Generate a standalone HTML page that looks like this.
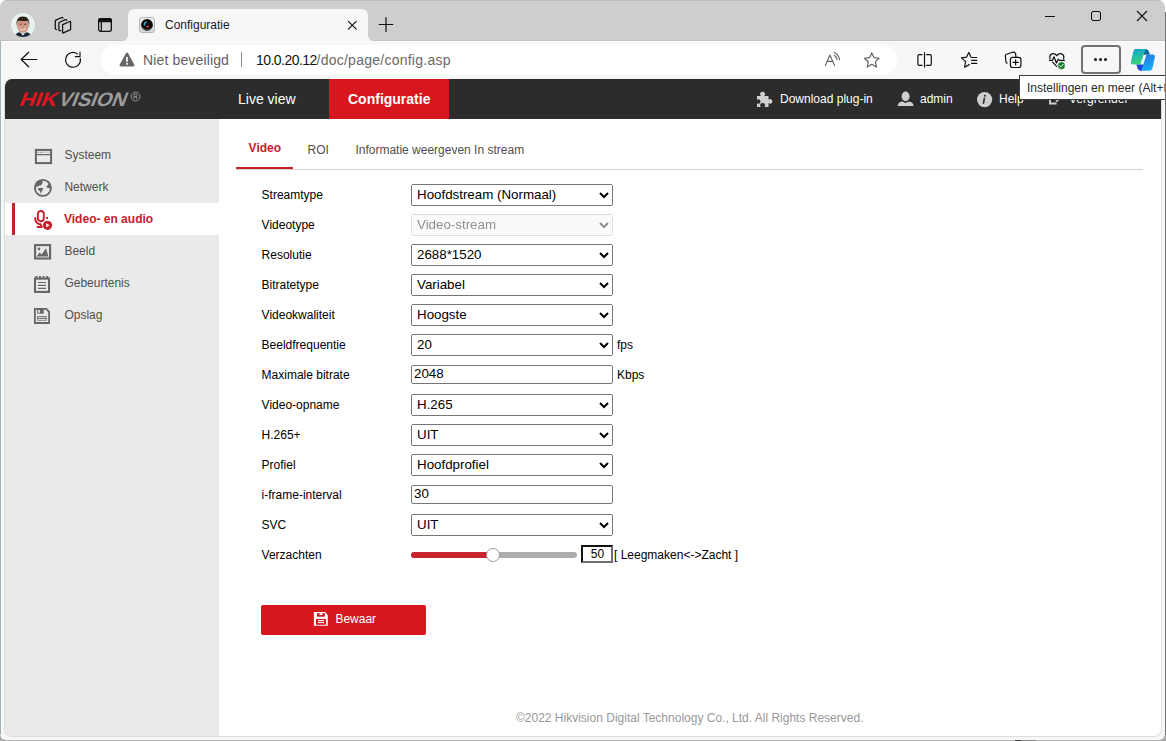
<!DOCTYPE html>
<html><head><meta charset="utf-8">
<style>
*{box-sizing:border-box}
html,body{margin:0;padding:0;width:1166px;height:741px;overflow:hidden;background:linear-gradient(#fff 0,#fff 50%,#a8a8a8 50%);font-family:"Liberation Sans",sans-serif}
.a{position:absolute}
.t{position:absolute;white-space:nowrap;line-height:12px;font-size:12px}
#win{position:absolute;left:0;top:0;width:1165px;height:740px;background:#f7f7f7;border-radius:7px 7px 6px 6px;overflow:hidden}
#lcol{position:absolute;left:0;top:41px;width:1px;height:694px;background:#a4b4bd}
#rcol{position:absolute;left:1165px;top:12px;width:1px;height:723px;background:#747474}
#brow{position:absolute;left:6px;top:740px;width:1154px;height:1px;background:#b6b6b6}
#tabstrip{position:absolute;left:0;top:0;width:1165px;height:41px;background:#cecece;border-top:1px solid #bdbdbd}
#tab{position:absolute;left:128px;top:9px;width:240px;height:32px;background:#f7f7f7;border-radius:6px 6px 0 0}
#addr{position:absolute;left:101px;top:45px;width:796px;height:30px;background:#fff;border-radius:15px}
#page{position:absolute;left:4px;top:79px;width:1158px;height:658px;background:#fff;border:1px solid #dcdcdc;border-top:0;border-radius:8px;overflow:hidden}
#hdr{position:absolute;left:0;top:0;width:1156px;height:40px;background:#2c2c2c}
#side{position:absolute;left:0;top:40px;width:214px;height:617px;background:#eaeaea}
.nav{color:#fff;font-size:14px;line-height:14px}
.hn{color:#fff}
.si{color:#4f4f4f}
.lab{color:#000}
select{position:absolute;left:411px;width:202px;height:22px;font-family:"Liberation Sans",sans-serif;font-size:13.333px;margin:0;padding:0 0 2px 1px}
select:disabled{color:#606060}
input.txt{position:absolute;left:411px;width:202px;height:19px;font-family:"Liberation Sans",sans-serif;font-size:13.333px;color:#000;margin:0;padding:0 2px 2px 2px;border:1px solid #767676;border-radius:2px}
.unit{color:#000}
</style></head><body>
<div id="win">
  <!-- ===== browser chrome ===== -->
  <div id="tabstrip"></div>
  <div class="a" style="left:0;top:40px;width:1165px;height:1px;background:#c2c2c2"></div>
  <div class="a" style="left:0;top:41px;width:1165px;height:1px;background:#fbfbfb"></div>
  <!-- avatar -->
  <svg class="a" style="left:10px;top:12px" width="26" height="26" viewBox="0 0 26 26">
    <defs><clipPath id="avc"><circle cx="13" cy="13" r="12"/></clipPath><filter id="avb"><feGaussianBlur stdDeviation="0.55"/></filter></defs>
    <circle cx="13" cy="13" r="12" fill="#e8f2ec"/>
    <g clip-path="url(#avc)" filter="url(#avb)">
      <path d="M4.5 26 Q5.5 21 9 20.2 L12.8 21.8 L17 20.2 Q20.8 21 21.8 26 Z" fill="#1b2538"/>
      <path d="M11 21.2 L12.9 23.8 L15 21.2 Z" fill="#e8eef0"/>
      <ellipse cx="12.9" cy="13.4" rx="5.9" ry="7.4" fill="#cc9482"/>
      <ellipse cx="10.2" cy="15.6" rx="1.9" ry="1.5" fill="#dca292"/>
      <ellipse cx="15.6" cy="15.6" rx="1.9" ry="1.5" fill="#dca292"/>
      <path d="M6.6 14.4 Q5.4 4.6 12.9 4.6 Q20.4 4.6 19.2 14.4 Q18.8 9.8 17.6 8.8 Q12.9 9.2 8.2 8.8 Q7 9.8 6.6 14.4Z" fill="#2e231c"/>
      <path d="M9.9 12.3 H11.4 M14.4 12.3 H15.9" stroke="#4a3329" stroke-width="1"/>
      <path d="M10.2 17 Q12.9 19 15.6 17" stroke="#f3e6df" stroke-width="1.2" fill="none"/>
    </g>
  </svg>
  <!-- workspaces -->
  <svg class="a" style="left:50px;top:12px" width="26" height="26" viewBox="0 0 26 26" fill="none" stroke="#111" stroke-width="1.25" stroke-linejoin="round" stroke-linecap="round">
    <path d="M12.6 12.6 L19.8 9.5 Q20.6 9.2 20.6 10.2 V17.2 Q20.6 17.7 20.1 17.9 L13.3 20.9 Q12.6 21.1 12.6 20.4 Z"/>
    <path d="M16.8 8.2 L16.3 7.7 Q16 7.4 15.5 7.6 L9.5 10.2 Q8.9 10.5 8.9 11.2 V18 Q8.9 18.7 9.6 18.7 H10.8"/>
    <path d="M13 6.1 L12.6 5.6 Q12.3 5.3 11.8 5.5 L5.9 8.1 Q5.3 8.4 5.3 9.1 V16.6 Q5.3 17.2 5.9 17.4 L6.4 17.6"/>
  </svg>
  <!-- tab actions -->
  <svg class="a" style="left:96px;top:16px" width="18" height="18" viewBox="0 0 18 18" fill="none" stroke="#111" stroke-width="1.3">
    <rect x="3.2" y="5" width="2.2" height="9.8" fill="#e4e4e4" stroke="none"/>
    <rect x="2.65" y="2.65" width="12.7" height="12.7" rx="2"/>
    <path d="M2.7 4.6 Q2.7 2.7 4.6 2.7 H13.4 Q15.3 2.7 15.3 4.6 V5.6 H2.7 Z" fill="#111"/>
    <path d="M5.3 5.6 V15.3"/>
  </svg>
  <!-- tab -->
  <div id="tab"></div>
  <div class="a" style="left:123px;top:36px;width:5px;height:5px;background:radial-gradient(circle at 0 0,#cecece 4.5px,#f7f7f7 5px)"></div>
  <div class="a" style="left:368px;top:36px;width:5px;height:5px;background:radial-gradient(circle at 100% 0,#cecece 4.5px,#f7f7f7 5px)"></div>
  <!-- favicon -->
  <svg class="a" style="left:139px;top:17px" width="16" height="16" viewBox="0 0 16 16">
    <defs><linearGradient id="fvg" x1="0" y1="0" x2="0" y2="1"><stop offset="0" stop-color="#f2f2f2"/><stop offset="1" stop-color="#d6d6d6"/></linearGradient></defs>
    <rect x="0.5" y="0.5" width="15" height="15" rx="2.5" fill="url(#fvg)" stroke="#b5b5b5"/>
    <circle cx="8" cy="7.9" r="5.9" fill="#0a0a0a"/>
    <path d="M3.4 9.6 A4.9 4.9 0 0 0 12.4 10.4" stroke="#6a6a6a" stroke-width="0.7" fill="none"/>
    <path d="M4.6 8.2 Q4.6 4.8 8 4.3 L7.6 5.6 Q6 6.4 6 8.4 Z" fill="#4fb0e0"/>
    <path d="M6.6 9.2 Q8.2 7.8 10.6 8.6 Q10.6 11 8.6 11.2 Q7.2 11.2 6.6 9.2 Z" fill="#7a0f1c"/>
    <ellipse cx="8.9" cy="9.5" rx="1" ry="0.6" fill="#e0607a"/>
  </svg>
  <div class="t" style="left:165px;top:19.4px;color:#1a1a1a">Configuratie</div>
  <!-- tab close -->
  <svg class="a" style="left:346px;top:19px" width="12" height="12" viewBox="0 0 12 12" stroke="#111" stroke-width="1.15" stroke-linecap="round">
    <path d="M2.4 2.4 L10.2 10.2 M10.2 2.4 L2.4 10.2"/>
  </svg>
  <!-- new tab -->
  <svg class="a" style="left:377px;top:16px" width="18" height="18" viewBox="0 0 18 18" stroke="#111" stroke-width="1.2" stroke-linecap="round">
    <path d="M9 1.6 V15.4 M2.2 8.5 H15.8"/>
  </svg>
  <!-- window controls -->
  <div class="a" style="left:1045px;top:16px;width:10px;height:1px;background:#111"></div>
  <div class="a" style="left:1091px;top:11px;width:10px;height:10px;border:1px solid #111;border-radius:2px"></div>
  <svg class="a" style="left:1136px;top:10px" width="12" height="12" viewBox="0 0 12 12" stroke="#111" stroke-width="1.1">
    <path d="M1 1 L11 11 M11 1 L1 11"/>
  </svg>

  <!-- toolbar -->
  <svg class="a" style="left:19px;top:50px" width="20" height="20" viewBox="0 0 20 20" fill="none" stroke="#111" stroke-width="1.2" stroke-linecap="round" stroke-linejoin="round">
    <path d="M2.2 9.5 H17.8 M9.7 2.2 L2.2 9.5 L9.7 16.8"/>
  </svg>
  <svg class="a" style="left:63px;top:50px" width="20" height="20" viewBox="0 0 20 20" fill="none" stroke="#111" stroke-width="1.2" stroke-linecap="round">
    <path d="M17.3 8.6 A7.4 7.4 0 1 1 14.4 3.9"/>
    <path d="M17 2.2 V6.6 H12.3"/>
  </svg>
  <div id="addr"></div>
  <svg class="a" style="left:118px;top:51px" width="18" height="17" viewBox="0 0 18 17">
    <path d="M9 1.6 Q9.6 1.6 10 2.3 L16.4 13.8 Q16.8 15.5 15.2 15.5 H2.8 Q1.2 15.5 1.6 13.8 L8 2.3 Q8.4 1.6 9 1.6 Z" fill="#666"/>
    <rect x="8" y="5.9" width="2" height="5" fill="#e9e9e9"/>
    <rect x="8" y="12" width="2" height="1.7" fill="#e9e9e9"/>
  </svg>
  <div class="t" style="left:143px;top:53px;font-size:14px;line-height:14px;color:#5f5f5f;letter-spacing:0.14px">Niet beveiligd</div>
  <div class="a" style="left:241px;top:52px;width:1px;height:15px;background:#8a8a8a"></div>
  <div class="t" style="left:256px;top:53px;font-size:14px;line-height:14px;color:#141414;letter-spacing:-0.54px">10.0.20.12</div>
  <div class="t" style="left:316.5px;top:53px;font-size:14px;line-height:14px;color:#6a6a6a;letter-spacing:0.25px">/doc/page/config.asp</div>
  <!-- read aloud -->
  <svg class="a" style="left:822px;top:50px" width="20" height="18" viewBox="0 0 20 18" fill="none" stroke="#5e5e5e" stroke-width="1.1" stroke-linecap="round" stroke-linejoin="round">
    <path d="M3.3 15.6 L7.9 5 L12.6 15.6 M5 11.4 H10.9"/>
    <path d="M12.3 5.2 Q14.5 6.8 15 9.4"/>
    <path d="M12.3 2.2 Q16.8 4.6 17.5 9.7"/>
  </svg>
  <!-- star -->
  <svg class="a" style="left:862px;top:50px" width="20" height="20" viewBox="0 0 20 20" fill="none" stroke="#5e5e5e" stroke-width="1.15" stroke-linejoin="round">
    <path d="M9.8 2.9 L12 7.6 L17.2 8.2 L13.4 11.7 L14.5 16.9 L9.8 14.3 L5.2 16.9 L6.3 11.7 L2.4 8.2 L7.6 7.6 Z"/>
  </svg>
  <!-- split screen -->
  <svg class="a" style="left:915px;top:50px" width="20" height="20" viewBox="0 0 20 20" fill="none" stroke="#111" stroke-width="1.2">
    <path d="M7.5 4.7 H4.3 Q2.9 4.7 2.9 6.1 V14 Q2.9 15.4 4.3 15.4 H7.5"/>
    <path d="M11.1 4.7 H14.9 Q16.3 4.7 16.3 6.1 V14 Q16.3 15.4 14.9 15.4 H11.1"/>
    <path d="M9.5 2.2 V17.6"/>
  </svg>
  <!-- favorites -->
  <svg class="a" style="left:959px;top:50px" width="20" height="20" viewBox="0 0 20 20" fill="none" stroke="#111" stroke-width="1.2" stroke-linejoin="round" stroke-linecap="round">
    <path d="M10.3 14.6 L5.6 17.2 L6.6 11.6 L2.4 7.9 L7.6 7.1 L9.8 2.5 L12 7.1"/>
    <path d="M12.6 7.5 H17.8 M12.6 10.4 H17.8 M12.6 13.4 H17.8"/>
  </svg>
  <!-- collections -->
  <svg class="a" style="left:1003px;top:50px" width="20" height="20" viewBox="0 0 20 20" fill="none" stroke="#111" stroke-width="1.2" stroke-linejoin="round" stroke-linecap="round">
    <path d="M4.2 13.2 Q3.2 12.9 3 11.8 L2.3 5.8 Q2.2 4.6 3.4 4.2 L9.8 2.2 Q11.2 1.8 12 2.8 L12.6 3.6 L12.9 7.2"/>
    <rect x="7.4" y="7.3" width="10.5" height="10.2" rx="2.2"/>
    <path d="M12.6 9.8 V15 M10 12.4 H15.2"/>
  </svg>
  <!-- health -->
  <svg class="a" style="left:1047px;top:50px" width="22" height="22" viewBox="0 0 22 22" fill="none" stroke="#111" stroke-width="1.2" stroke-linejoin="round" stroke-linecap="round">
    <path d="M3.1 9 Q2 5.2 4.8 3.9 Q7.6 2.8 9.8 5.7 Q12 2.8 14.8 3.9 Q17.6 5.2 16.6 9"/>
    <path d="M2.4 10.4 H5.4 L7 6.8 L9.4 13 L11.2 9.2 L12.5 10.4 H17.4"/>
    <path d="M5.6 12.2 L9.6 16.4"/>
    <circle cx="14.4" cy="15.6" r="3.9" fill="#137a2a" stroke="#f7f7f7" stroke-width="0.8"/>
    <path d="M12.6 15.7 L13.9 16.9 L16.2 14.3" stroke="#fff" stroke-width="1"/>
  </svg>
  <!-- more button -->
  <div class="a" style="left:1081px;top:45px;width:40px;height:29px;border:2px solid #6e7377;border-radius:4px"></div>
  <div class="a" style="left:1094px;top:58px;width:3px;height:3px;border-radius:50%;background:#111"></div>
  <div class="a" style="left:1099px;top:58px;width:3px;height:3px;border-radius:50%;background:#111"></div>
  <div class="a" style="left:1104px;top:58px;width:3px;height:3px;border-radius:50%;background:#111"></div>
  <!-- copilot -->
  <svg class="a" style="left:1126px;top:44px" width="34" height="32" viewBox="0 0 34 32">
    <defs>
      <linearGradient id="cpa" x1="0" y1="0" x2="0.3" y2="1"><stop offset="0" stop-color="#0aa0d8"/><stop offset="1" stop-color="#3ad47c"/></linearGradient>
      <linearGradient id="cpb" x1="0.2" y1="0" x2="0.5" y2="1"><stop offset="0" stop-color="#2b78e0"/><stop offset="1" stop-color="#12aef6"/></linearGradient>
    </defs>
    <path d="M17.4 10.6 L21 10.6 L17.4 20.6 L13.8 20.6 Z" fill="#fff"/>
    <path d="M17.4 5 H19.8 Q21.8 5 22.8 7.5 L24 10.8 H15.8 Z" fill="#0b6a9a"/>
    <path d="M9.2 5 H19.6 L14.4 20.6 H7 Q4.4 20.6 5 17.6 L7.2 8.2 Q7.8 5 9.2 5 Z" fill="url(#cpa)"/>
    <path d="M10.4 20.4 H17.8 L15.8 26.7 H14.4 Q12.4 26.7 11.6 24.6 Z" fill="#1a48d6"/>
    <path d="M20.4 10.6 H26.8 Q29.4 10.6 28.8 13.6 L26.6 23.4 Q26 26.7 23.4 26.7 H15.4 Z" fill="url(#cpb)"/>
  </svg>
  <!-- ===== page ===== -->
  <div id="page"><div id="hdr"></div><div id="side"></div></div>
  <!-- logo -->
  <div class="t" style="left:17px;top:90px;font-size:19.5px;line-height:19.5px;font-weight:bold;color:#e0141d;transform:skewX(-21deg) scaleX(1.1);transform-origin:0 100%">HIK</div>
  <div class="t" style="left:56px;top:90px;font-size:19.5px;line-height:19.5px;font-weight:bold;color:#9c9c9c;transform:skewX(-21deg) scaleX(1.02);transform-origin:0 100%">VISION</div>
  <svg class="a" style="left:130px;top:91px" width="11" height="11" viewBox="0 0 11 11" fill="none" stroke="#9c9c9c" stroke-width="0.9">
    <circle cx="5.5" cy="5.5" r="4.4"/>
    <path d="M4 8 V3.2 H5.9 Q7.2 3.2 7.2 4.4 Q7.2 5.6 5.9 5.6 H4 M5.8 5.6 L7.3 8"/>
  </svg>
  <!-- nav -->
  <div class="t nav" style="left:238px;top:92px">Live view</div>
  <div class="a" style="left:329px;top:79px;width:120px;height:40px;background:#d7161e"></div>
  <div class="t nav" style="left:348px;top:92px;font-weight:bold">Configuratie</div>
  <!-- puzzle -->
  <svg class="a" style="left:756px;top:91px" width="17" height="17" viewBox="0 0 17 17" fill="#cfcfcf">
    <path d="M1 5 H5 Q3.6 3.6 4.2 2.2 Q5 0.8 6.6 0.8 Q8.2 0.8 8.9 2.2 Q9.5 3.6 8.1 5 H12.5 V8.8 Q13.8 7.6 15.1 8.2 Q16.4 8.9 16.4 10.4 Q16.4 11.9 15.1 12.6 Q13.8 13.2 12.5 12 V16 H8.4 Q9.6 14.6 9 13.4 Q8.3 12.1 6.6 12.1 Q4.9 12.1 4.3 13.4 Q3.7 14.6 4.8 16 H1 V12.3 Q2.3 13.2 3.4 12.6 Q4.5 11.9 4.5 10.5 Q4.5 9.1 3.4 8.4 Q2.3 7.8 1 8.7 Z"/>
  </svg>
  <div class="t hn" style="left:780px;top:93px">Download plug-in</div>
  <!-- user -->
  <svg class="a" style="left:897px;top:91px" width="17" height="16" viewBox="0 0 17 16" fill="#cfcfcf">
    <ellipse cx="8.6" cy="5.4" rx="4" ry="4.8"/>
    <path d="M0.6 15 Q0.8 11.2 5.2 10.4 L8.6 12 L12 10.4 Q16.4 11.2 16.6 15 Z"/>
  </svg>
  <div class="t hn" style="left:920px;top:93px">admin</div>
  <!-- info -->
  <svg class="a" style="left:976px;top:91px" width="17" height="17" viewBox="0 0 17 17">
    <circle cx="8.6" cy="8.6" r="7.6" fill="#cfcfcf"/>
    <path d="M8.4 7.2 L7.5 12.2" stroke="#2c2c2c" stroke-width="1.6" stroke-linecap="round"/>
    <circle cx="9" cy="4.8" r="1" fill="#2c2c2c"/>
  </svg>
  <div class="t hn" style="left:999px;top:93px">Help</div>
  <!-- lock/logout -->
  <svg class="a" style="left:1047px;top:91px" width="16" height="17" viewBox="0 0 16 17" fill="none" stroke="#cfcfcf" stroke-width="2">
    <path d="M7 2 H3 V12.4 H9.6"/>
    <path d="M9 10.6 L13.4 7" stroke-width="1.8"/>
  </svg>
  <div class="t hn" style="left:1069px;top:93px">Vergrendel</div>

  <!-- sidebar -->
  <div class="a" style="left:5px;top:203px;width:214px;height:32px;background:#fff"></div>
  <div class="a" style="left:12px;top:203px;width:3px;height:32px;background:#c8202a"></div>
  <!-- systeem icon -->
  <svg class="a" style="left:34px;top:148px" width="19" height="17" viewBox="0 0 19 17" fill="none" stroke="#666" >
    <rect x="1.9" y="1.9" width="15.2" height="13.2" stroke-width="2"/>
    <path d="M2.5 6.6 H16.5" stroke-width="1.2"/>
    <path d="M3.6 4.2 H4.8 M5.8 4.2 H7 M8 4.2 H9.2" stroke-width="1.1"/>
    <path d="M9.8 4.2 H15.6" stroke-width="0.5" stroke="#999"/>
  </svg>
  <div class="t si" style="left:64.4px;top:149px">Systeem</div>
  <!-- globe icon -->
  <svg class="a" style="left:31px;top:176px" width="24" height="24" viewBox="0 0 24 24">
    <circle cx="11.9" cy="11.9" r="8" fill="#eaeaea" stroke="#666" stroke-width="1.9"/>
    <path d="M4.2 11 Q4.4 5.8 8.4 4.2 L11.8 3.8 L11.4 7.2 L9.8 9.4 L7.8 9.8 L6.4 10.8 Z" fill="#666"/>
    <path d="M6.8 12 L12.4 12 L11.2 14.4 L9.9 17.8 L9 15.2 L7.2 13.8 Z" fill="#666"/>
    <path d="M18.2 7.2 Q20.2 9.6 20.2 12.4 L17.2 12 L15 11 L16.6 9.2 Z" fill="#666"/>
  </svg>
  <div class="t si" style="left:64.4px;top:181px">Netwerk</div>
  <!-- video icon -->
  <svg class="a" style="left:33px;top:208px" width="20" height="24" viewBox="0 0 20 24" fill="none" stroke="#c8202a" stroke-width="1.9">
    <rect x="4.8" y="3" width="6" height="10.2" rx="3"/>
    <path d="M2.1 9.2 Q2.1 15.8 8 16.4" stroke-width="2"/>
    <path d="M7.9 15.8 V18.6 M3.8 19 H9.6" stroke-width="1.9"/>
    <rect x="13" y="8.9" width="2" height="2" fill="#c8202a" stroke="none"/>
    <circle cx="14.5" cy="17.3" r="4.6" fill="#c8202a" stroke="none"/>
    <path d="M13.2 15.2 L16.6 17.3 L13.2 19.4 Z" fill="#fff" stroke="none"/>
  </svg>
  <div class="t" style="left:64px;top:213px;color:#c8202a;font-weight:bold">Video- en audio</div>
  <!-- beeld icon -->
  <svg class="a" style="left:33px;top:243px" width="19" height="17" viewBox="0 0 19 17">
    <rect x="2.1" y="2.1" width="15" height="13.4" fill="none" stroke="#666" stroke-width="2.1"/>
    <circle cx="6" cy="5.9" r="1.3" fill="#666"/>
    <path d="M3.6 13.5 L6.6 9.6 L8.6 11.4 L13 5.2 L15.4 13.5 Z" fill="#666"/>
  </svg>
  <div class="t si" style="left:64.4px;top:245px">Beeld</div>
  <!-- gebeurtenis icon -->
  <svg class="a" style="left:33px;top:275px" width="18" height="19" viewBox="0 0 18 19" fill="none" stroke="#666">
    <rect x="2" y="3.6" width="14" height="13.3" stroke-width="2.1"/>
    <path d="M3.4 0.9 V3 M7 0.9 V3 M10.6 0.9 V3 M14.2 0.9 V3" stroke-width="2"/>
    <path d="M5 7.5 H13 M5 10.4 H13 M5 13.4 H13" stroke-width="1.1"/>
  </svg>
  <div class="t si" style="left:64.4px;top:277px">Gebeurtenis</div>
  <!-- opslag icon -->
  <svg class="a" style="left:31px;top:305px" width="22" height="22" viewBox="0 0 22 22">
    <path d="M3.9 3.9 H15.3 L18.1 6.9 V18 H3.9 Z" fill="none" stroke="#666" stroke-width="1.8"/>
    <rect x="6.2" y="4" width="6.5" height="4.7" fill="#666"/>
    <rect x="7.2" y="5" width="1.7" height="2.8" fill="#eaeaea"/>
    <rect x="6.2" y="11.2" width="9.5" height="4.4" fill="#666"/>
    <rect x="7" y="12.2" width="7.8" height="0.9" fill="#eaeaea"/>
    <rect x="7" y="14.1" width="7.8" height="0.9" fill="#eaeaea"/>
  </svg>
  <div class="t si" style="left:64.4px;top:309px">Opslag</div>

  <!-- tabs -->
  <div class="t" style="left:248.6px;top:142px;color:#c8202a;font-weight:bold">Video</div>
  <div class="t" style="left:307.6px;top:144px;color:#4f4f4f">ROI</div>
  <div class="t" style="left:355.4px;top:144px;color:#4f4f4f">Informatie weergeven In stream</div>
  <div class="a" style="left:236px;top:169px;width:907px;height:1px;background:#d2d2d2"></div>
  <div class="a" style="left:236px;top:167px;width:57px;height:2px;background:#c8202a"></div>
  <!-- form -->
  <div class="t lab" style="left:261.6px;top:189px">Streamtype</div>
  <div class="t lab" style="left:261.6px;top:219px">Videotype</div>
  <div class="t lab" style="left:261.6px;top:249px">Resolutie</div>
  <div class="t lab" style="left:261.6px;top:279px">Bitratetype</div>
  <div class="t lab" style="left:261.6px;top:309px">Videokwaliteit</div>
  <div class="t lab" style="left:261.6px;top:339px">Beeldfrequentie</div>
  <div class="t lab" style="left:261.6px;top:369px">Maximale bitrate</div>
  <div class="t lab" style="left:261.6px;top:399px">Video-opname</div>
  <div class="t lab" style="left:261.6px;top:429px">H.265+</div>
  <div class="t lab" style="left:261.6px;top:459px">Profiel</div>
  <div class="t lab" style="left:261.6px;top:489px">i-frame-interval</div>
  <div class="t lab" style="left:261.6px;top:519px">SVC</div>
  <div class="t lab" style="left:261.6px;top:549px">Verzachten</div>

  <select style="top:184px"><option>Hoofdstream (Normaal)</option></select>
  <select style="top:214px" disabled><option>Video-stream</option></select>
  <select style="top:244px"><option>2688*1520</option></select>
  <select style="top:274px"><option>Variabel</option></select>
  <select style="top:304px"><option>Hoogste</option></select>
  <select style="top:334px"><option>20</option></select>
  <div class="t unit" style="left:617px;top:339px">fps</div>
  <input class="txt" style="top:365px" value="2048">
  <div class="t unit" style="left:617px;top:369px">Kbps</div>
  <select style="top:394px"><option>H.265</option></select>
  <select style="top:424px"><option>UIT</option></select>
  <select style="top:454px"><option>Hoofdprofiel</option></select>
  <input class="txt" style="top:485px" value="30">
  <select style="top:514px"><option>UIT</option></select>

  <!-- slider -->
  <div class="a" style="left:411px;top:552px;width:166px;height:6px;border-radius:3px;background:#adadad"></div>
  <div class="a" style="left:411px;top:552px;width:82px;height:6px;border-radius:3px 0 0 3px;background:#c8262f"></div>
  <div class="a" style="left:486px;top:548px;width:14px;height:14px;border-radius:50%;background:#fff;border:1px solid #9a9a9a"></div>
  <div class="a" style="left:581px;top:545px;width:32px;height:18px;border:2px solid;border-color:#111 #707070 #707070 #111;font-size:12px;line-height:14px;text-align:center;padding-left:1px">50</div>
  <div class="t" style="left:614px;top:549px;color:#000">[ Leegmaken&lt;-&gt;Zacht ]</div>

  <!-- button -->
  <div class="a" style="left:261px;top:605px;width:165px;height:30px;background:#d7181f;border-radius:2px"></div>
  <svg class="a" style="left:313px;top:611px" width="16" height="16" viewBox="0 0 16 16">
    <path d="M0.9 0.9 H12.1 L14.8 4.2 V14.8 H0.9 Z" fill="#fff"/>
    <path d="M4 2.1 H11.9 V5.7 H4 Z" fill="#d7181f"/>
    <rect x="6.6" y="2.1" width="2.9" height="1.9" fill="#fff"/>
    <rect x="3" y="8" width="10" height="5.8" fill="#d7181f"/>
    <rect x="5" y="9" width="6" height="1.1" fill="#fff"/>
    <rect x="5" y="10.9" width="6" height="1.2" fill="#fff"/>
  </svg>
  <div class="t" style="left:335.4px;top:613px;color:#fff">Bewaar</div>

  <div class="t" style="left:516px;top:712px;color:#999">©2022 Hikvision Digital Technology Co., Ltd. All Rights Reserved.</div>

  <!-- tooltip -->
  <div class="a" style="left:1019px;top:75px;width:160px;height:25px;background:#fff;border:1px solid #3a3a3a"></div>
  <div class="t" style="left:1027px;top:81.4px;line-height:14px;color:#2a2a2a">Instellingen en meer (Alt+F)</div>
</div>
<div id="lcol"></div><div id="rcol"></div><div id="brow"></div><div class="a" style="left:1015px;top:740px;width:6px;height:1px;background:#444"></div><div class="a" style="left:1021px;top:740px;width:15px;height:1px;background:#888"></div>
</body></html>
